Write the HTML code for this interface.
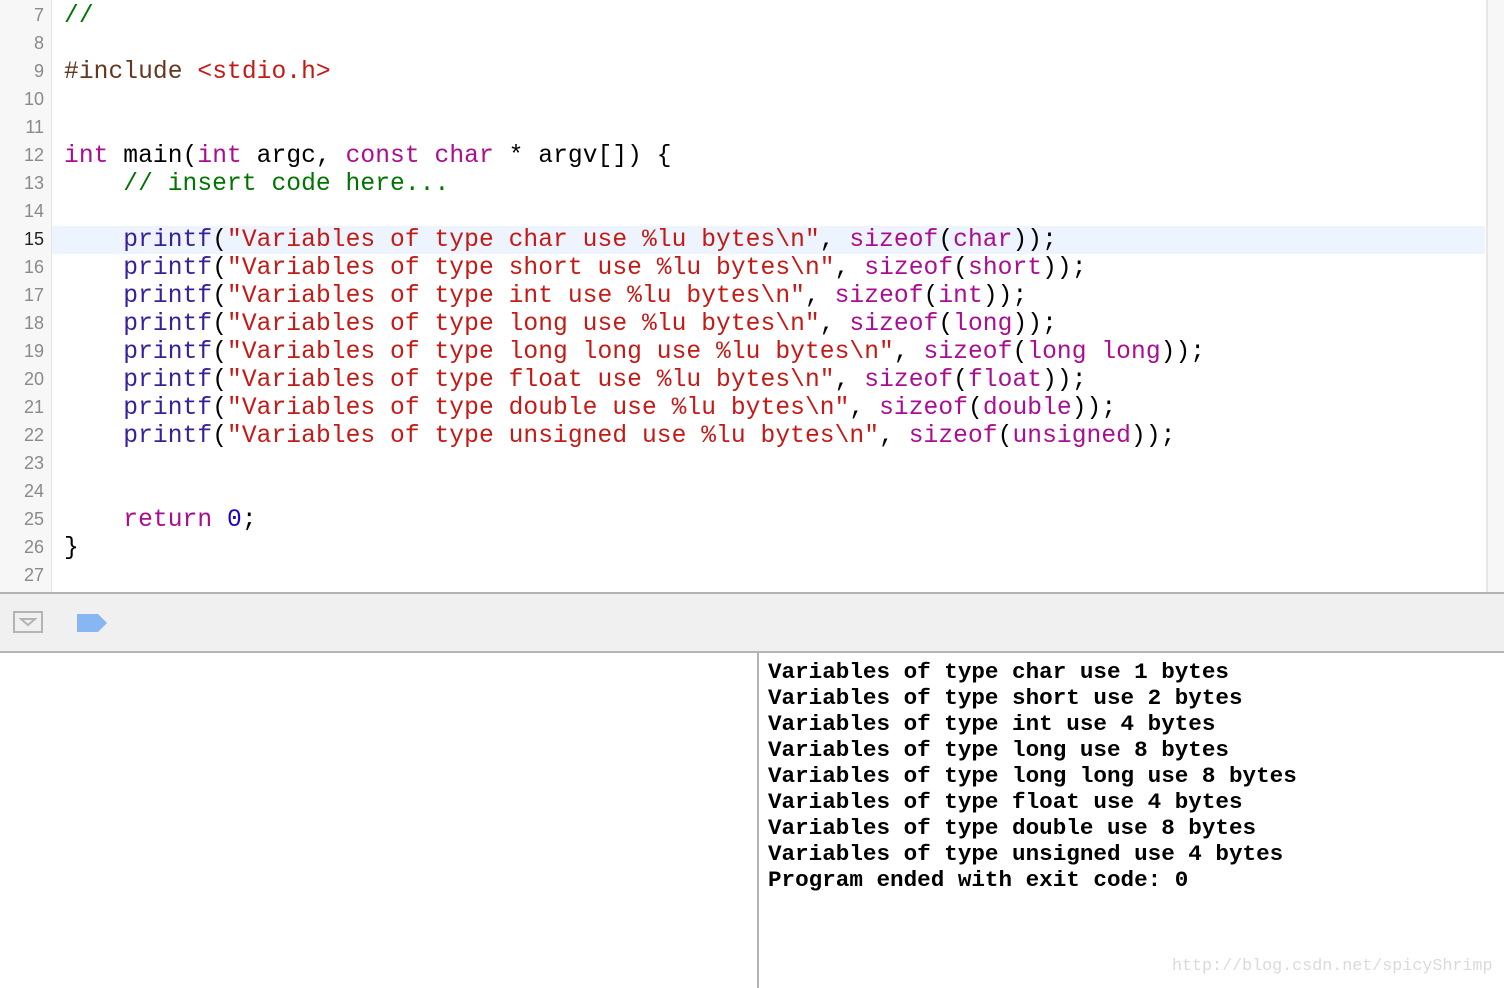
<!DOCTYPE html>
<html><head><meta charset="utf-8"><style>
body{margin:0;width:1504px;height:988px;overflow:hidden;background:#fff;position:relative;font-family:"Liberation Mono",monospace}
#gut{position:absolute;left:0;top:0;width:51px;height:592px;background:#f7f7f7;border-right:1px solid #e4e4e4}
#sb{position:absolute;left:1486px;top:0;width:18px;height:592px;background:#f7f7f7;border-left:2px solid #e8e8e8}
.hl{position:absolute;left:52px;top:226px;width:1433px;height:28px;background:#eef4fd}
.ln{position:absolute;left:0;width:44px;text-align:right;font-family:"Liberation Sans",sans-serif;font-size:18px;color:#8a8a8a;line-height:28px}
.cl{position:absolute;left:64px;font-size:24.6px;letter-spacing:0.06px;line-height:28px;white-space:pre;color:#000}
.k{color:#aa0d91}.f{color:#3a1f9c}.s{color:#c41a16}.c{color:#007400}.p{color:#643820}.n{color:#1c00cf}
#bar{position:absolute;left:0;top:592px;width:1504px;height:57px;background:#f0f0f0;border-top:2px solid #b4b4b4;border-bottom:2px solid #b4b4b4}
#con{position:absolute;left:757px;top:651px;width:2px;height:337px;background:#b4b4b4}
.o{position:absolute;left:768px;font-size:22.6px;font-weight:bold;line-height:26px;white-space:pre;color:#000}
#wm{position:absolute;left:1172px;top:957px;font-family:"Liberation Mono",monospace;font-size:16.7px;color:#dadada}
</style></head><body>
<div id="gut"></div><div id="sb"></div><div class="hl"></div>
<div class="ln" style="top:1px">7</div>
<div class="ln" style="top:29px">8</div>
<div class="ln" style="top:57px">9</div>
<div class="ln" style="top:85px">10</div>
<div class="ln" style="top:113px">11</div>
<div class="ln" style="top:141px">12</div>
<div class="ln" style="top:169px">13</div>
<div class="ln" style="top:197px">14</div>
<div class="ln" style="top:225px;color:#222">15</div>
<div class="ln" style="top:253px">16</div>
<div class="ln" style="top:281px">17</div>
<div class="ln" style="top:309px">18</div>
<div class="ln" style="top:337px">19</div>
<div class="ln" style="top:365px">20</div>
<div class="ln" style="top:393px">21</div>
<div class="ln" style="top:421px">22</div>
<div class="ln" style="top:449px">23</div>
<div class="ln" style="top:477px">24</div>
<div class="ln" style="top:505px">25</div>
<div class="ln" style="top:533px">26</div>
<div class="ln" style="top:561px">27</div>
<div class="cl c" style="top:3px">//</div>
<div class="cl" style="top:59px"><span class="p">#include </span><span class="s">&lt;stdio.h&gt;</span></div>
<div class="cl" style="top:143px"><span class="k">int</span> main(<span class="k">int</span> argc, <span class="k">const</span> <span class="k">char</span> * argv[]) {</div>
<div class="cl c" style="top:171px">    // insert code here...</div>
<div class="cl" style="top:227px">    <span class="f">printf</span>(<span class="s">"Variables of type char use %lu bytes\n"</span>, <span class="k">sizeof</span>(<span class="k">char</span>));</div>
<div class="cl" style="top:255px">    <span class="f">printf</span>(<span class="s">"Variables of type short use %lu bytes\n"</span>, <span class="k">sizeof</span>(<span class="k">short</span>));</div>
<div class="cl" style="top:283px">    <span class="f">printf</span>(<span class="s">"Variables of type int use %lu bytes\n"</span>, <span class="k">sizeof</span>(<span class="k">int</span>));</div>
<div class="cl" style="top:311px">    <span class="f">printf</span>(<span class="s">"Variables of type long use %lu bytes\n"</span>, <span class="k">sizeof</span>(<span class="k">long</span>));</div>
<div class="cl" style="top:339px">    <span class="f">printf</span>(<span class="s">"Variables of type long long use %lu bytes\n"</span>, <span class="k">sizeof</span>(<span class="k">long long</span>));</div>
<div class="cl" style="top:367px">    <span class="f">printf</span>(<span class="s">"Variables of type float use %lu bytes\n"</span>, <span class="k">sizeof</span>(<span class="k">float</span>));</div>
<div class="cl" style="top:395px">    <span class="f">printf</span>(<span class="s">"Variables of type double use %lu bytes\n"</span>, <span class="k">sizeof</span>(<span class="k">double</span>));</div>
<div class="cl" style="top:423px">    <span class="f">printf</span>(<span class="s">"Variables of type unsigned use %lu bytes\n"</span>, <span class="k">sizeof</span>(<span class="k">unsigned</span>));</div>
<div class="cl" style="top:507px">    <span class="k">return</span> <span class="n">0</span>;</div>
<div class="cl" style="top:535px">}</div>
<div id="bar">
<svg style="position:absolute;left:13px;top:17px" width="30" height="24"><rect x="1" y="1" width="28" height="20" fill="none" stroke="#b4b4b4" stroke-width="2"/><path d="M8 8 H22 L15 14 Z" fill="none" stroke="#b4b4b4" stroke-width="2"/></svg>
<svg style="position:absolute;left:77px;top:20px" width="30" height="20"><path d="M0 0 H21 L30 9 L21 18 H0 Z" fill="#88b6f2"/></svg>
</div>
<div id="con"></div>
<div class="o" style="top:659px">Variables of type char use 1 bytes</div>
<div class="o" style="top:685px">Variables of type short use 2 bytes</div>
<div class="o" style="top:711px">Variables of type int use 4 bytes</div>
<div class="o" style="top:737px">Variables of type long use 8 bytes</div>
<div class="o" style="top:763px">Variables of type long long use 8 bytes</div>
<div class="o" style="top:789px">Variables of type float use 4 bytes</div>
<div class="o" style="top:815px">Variables of type double use 8 bytes</div>
<div class="o" style="top:841px">Variables of type unsigned use 4 bytes</div>
<div class="o" style="top:867px">Program ended with exit code: 0</div>
<div id="wm">http://blog.csdn.net/spicyShrimp</div>
</body></html>
